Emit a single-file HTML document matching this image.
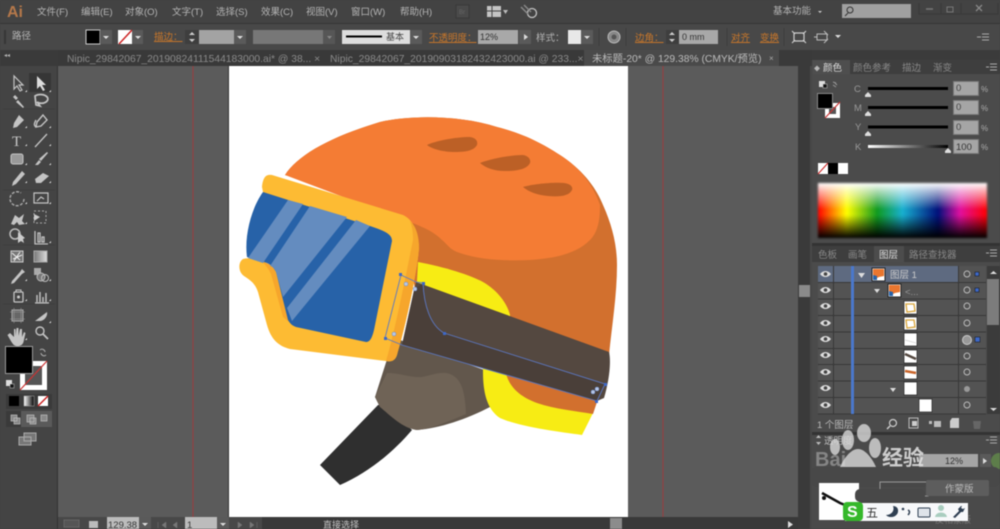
<!DOCTYPE html>
<html><head><meta charset="utf-8"><style>
html,body{margin:0;padding:0;background:#444;width:1000px;height:529px;overflow:hidden}
#w{position:relative;width:1000px;height:529px;overflow:hidden;filter:blur(.45px)}
#s{position:absolute;left:818px;top:183px;width:169px;height:55px;filter:blur(1px);background:linear-gradient(180deg,#fff 0,rgba(255,255,255,.65) 15%,rgba(255,255,255,0) 48%,rgba(0,0,0,0) 58%,#000 100%),linear-gradient(90deg,#f00 0,#ff0 17%,#109a20 35%,#18b0d0 50%,#00107a 71%,#e010a0 84%,#f00 100%)}
svg{position:absolute;left:0;top:0}
text{font-family:"Liberation Sans","Noto Sans CJK SC",sans-serif;font-size:9.5px;fill:#b4b4b4}
.o{fill:#c9772a}.d{fill:#999;font-size:9px}.i{fill:none;stroke:#c4c4c4;stroke-width:1.3}.f{fill:#c4c4c4}
</style></head><body><div id="w">
<svg width="1000" height="529" viewBox="0 0 1000 529">
<defs><linearGradient id="g" x1="0" x2="1"><stop offset="0" stop-color="#777"/><stop offset="1" stop-color="#ddd"/></linearGradient>
<linearGradient id="k" x1="0" x2="1"><stop offset="0" stop-color="#fff"/><stop offset="1" stop-color="#000"/></linearGradient></defs>
<rect width="1000" height="529" fill="#444"/>
<!-- bars -->
<rect width="1000" height="24" fill="#434343"/>
<rect y="24" width="1000" height="26" fill="#484848"/>
<rect y="50" width="1000" height="16" fill="#393939"/>
<rect y="23" width="1000" height="1" fill="#353535"/>
<rect x="0" y="66" width="58" height="463" fill="#444"/>
<rect x="57" y="50" width="1" height="479" fill="#333"/>
<rect x="58" y="66" width="740" height="451" fill="#5b5b5b"/>
<rect x="228" y="66" width="400" height="451" fill="#fff"/>
<rect x="228" y="66" width="1" height="451" fill="#333"/>
<path d="M193 66V517M663 66V517" stroke="#9a3c3e"/>
<rect x="798" y="66" width="12" height="463" fill="#3a3a3a"/>
<rect x="810" y="66" width="2" height="463" fill="#484848"/>
<rect x="799" y="285" width="11" height="12" fill="#8a8a8a"/>
<rect x="58" y="517" width="204" height="12" fill="#484848"/>
<rect x="262" y="517" width="536" height="12" fill="#393939"/>
<rect x="812" y="50" width="188" height="479" fill="#4b4b4b"/>
<rect x="812" y="50" width="188" height="10" fill="#3b3b3b"/>
<!-- menu -->
<text x="7" y="17" style="font-size:16px;font-weight:bold;fill:#b5784a">Ai</text>
<text x="37" y="15">文件(F)</text><text x="81" y="15">编辑(E)</text><text x="125" y="15">对象(O)</text><text x="172" y="15">文字(T)</text><text x="216" y="15">选择(S)</text><text x="261" y="15">效果(C)</text><text x="306" y="15">视图(V)</text><text x="351" y="15">窗口(W)</text><text x="400" y="15">帮助(H)</text>
<rect x="456" y="5" width="13" height="13" fill="#4a4a4a" stroke="#393939"/><text x="459" y="14" style="font-size:6px;fill:#666">Br</text>
<rect x="487" y="6" width="14" height="11" class="f"/><path d="M492 6V17M487 11H501" stroke="#444"/><path d="M503 10l5 0-2.500 4z" fill="#bbb"/>
<circle cx="532" cy="13" r="4.500" class="i"/><path d="M521 7l7 7M524 5l7 7" stroke="#888" stroke-width="1.500"/>
<text x="773" y="14">基本功能</text><path d="M818 11h4l-2 2z" fill="#ccc"/>
<rect x="842" y="4" width="69" height="14" fill="#a0a0a0"/><circle cx="850" cy="10" r="3" fill="none" stroke="#333"/><path d="M848 13l-3 3" stroke="#333"/>
<path d="M919 3V14H998V3M941 3V14M961 3V14" fill="none" stroke="#393939"/>
<path d="M926 9h7" stroke="#777" stroke-width="1.500"/><rect x="947" y="7" width="6" height="5" fill="none" stroke="#777"/><path d="M976 5l6 6M982 5l-6 6" stroke="#888" stroke-width="1.300"/>
<!-- control -->
<path d="M5 30V44" stroke="#373737" stroke-width="2"/>
<text x="12" y="39">路径</text>
<rect x="86" y="30" width="14" height="14" fill="#000" stroke="#ccc"/><rect x="100" y="30" width="12" height="14" fill="#5a5a5a"/><path d="M103 36h6l-3 3z" fill="#ddd"/>
<rect x="118" y="30" width="14" height="14" fill="#fff"/><path d="M119 44L132 30" stroke="#c22" stroke-width="1.500"/><rect x="132" y="30" width="11" height="14" fill="#5a5a5a"/><path d="M135 36h6l-3 3z" fill="#ddd"/>
<text x="154" y="40" class="o" style="text-decoration:underline">描边：</text>
<rect x="185" y="30" width="14" height="14" fill="#3e3e3e"/><path d="M189 35h6l-3-3zM189 39h6l-3 3z" fill="#ccc"/>
<rect x="199" y="30" width="35" height="14" fill="#a3a3a3"/><rect x="234" y="30" width="12" height="14" fill="#5a5a5a"/><path d="M237 36h6l-3 3z" fill="#ddd"/>
<rect x="253" y="30" width="70" height="14" fill="#777"/><rect x="323" y="30" width="12" height="14" fill="#565656"/><path d="M327 36h5l-2.500 3z" fill="#888"/>
<rect x="342" y="30" width="68" height="14" fill="#ddd"/><path d="M346 36.500h36" stroke="#000" stroke-width="2"/><text x="386" y="40" style="font-size:9px;fill:#444">基本</text>
<rect x="410" y="30" width="12" height="14" fill="#5a5a5a"/><path d="M413 36h6l-3 3z" fill="#ddd"/>
<text x="429" y="41" class="o" style="text-decoration:underline">不透明度：</text>
<rect x="478" y="30" width="40" height="14" fill="#a8a8a8"/><text x="480" y="40" style="fill:#333;font-size:9px">12%</text>
<rect x="519" y="30" width="12" height="14" fill="#5a5a5a"/><path d="M524 34l4 3-4 3z" fill="#ddd"/>
<text x="536" y="41">样式：</text>
<rect x="568" y="30" width="13" height="14" fill="#e8e8e8"/><rect x="581" y="30" width="12" height="14" fill="#5a5a5a"/><path d="M584 36h6l-3 3z" fill="#ddd"/>
<circle cx="614" cy="37" r="6" fill="#888" stroke="#bbb"/><circle cx="614" cy="37" r="2.500" fill="#555"/>
<path d="M599 28V46M626 28V46M727 28V46M784 28V46" stroke="#3d3d3d"/>
<text x="635" y="41" class="o" style="text-decoration:underline">边角：</text>
<rect x="666" y="30" width="13" height="14" fill="#3e3e3e"/><path d="M669 35h6l-3-3zM669 39h6l-3 3z" fill="#ccc"/>
<rect x="679" y="30" width="39" height="14" fill="#a8a8a8"/><text x="682" y="40" style="fill:#333;font-size:9px">0 mm</text>
<text x="731" y="41" class="o" style="text-decoration:underline">对齐</text><text x="760" y="41" class="o" style="text-decoration:underline">变换</text>
<path d="M794 33h10v8h-10zM792 31l3 3M806 31l-3 3M792 43l3-3M806 43l-3-3" fill="none" stroke="#ccc" stroke-width="1.200"/>
<path d="M817 34h10v6h-10zM824 31l4 4M824 43l4-4M814 37h3" fill="none" stroke="#bbb"/><path d="M835 35h6l-3 3z" fill="#ddd"/>
<path d="M977 37h4M982 34h7M982 37h7M982 40h7" stroke="#aaa"/>
<!-- tabs -->
<rect x="0" y="50" width="58" height="16" fill="#3a3a3a"/>
<text x="4" y="57" style="font-size:6px">◂◂</text>
<text x="67" y="62" style="fill:#8a8a8a;font-size:10.300px">Nipic_29842067_20190824111544183000.ai* @ 38... ×</text>
<text x="330" y="62" style="fill:#8a8a8a;font-size:10.300px">Nipic_29842067_20190903182432423000.ai @ 233...×</text>
<rect x="584" y="50" width="195" height="16" fill="#4a4a4a"/>
<text x="592" y="62" style="fill:#bbb;font-size:10.300px">未标题-20* @ 129.38% (CMYK/预览)</text><text x="769" y="61" style="fill:#aaa;font-size:8px">×</text>
<rect x="779" y="50" width="33" height="16" fill="#3a3a3a"/>
<!-- helmet -->
<path d="M285 175C298 155 330 137 380 122C410 115 460 115 497 127C525 134 545 145 563 157C585 172 597 190 603 205C612 225 617 245 617 265C617 295 612 325 609 355L415 290L400 200Z" fill="#d2702e"/>
<path d="M285 175C298 155 330 137 380 122C410 115 460 115 497 127C525 134 545 145 563 157C582 170 594 187 600 205C600 220 598 232 590 240C578 252 560 258 530 260C505 261 480 260 460 253C450 250 448 245 442 240C434 232 425 228 415 224Z" fill="#f47c34"/>
<path d="M427 145C435 141 455 137 470 137C476 138 478 141 477 145C474 150 468 152 455 152C443 152 432 149 427 145ZM480 163C490 159 510 155 523 155C529 156 531 160 530 163C527 169 518 171 505 171C494 171 486 168 480 163ZM523 187C533 184 553 182 564 183C571 184 573 187 572 190C569 196 560 197 548 196C537 195 529 192 523 187Z" fill="#bc6026"/>
<path d="M418 262C445 267 470 275 483 282C497 290 507 303 510 315L510 335L416 300Z" fill="#f7ec14"/>
<path d="M378 405L320 465L340 485C370 472 395 450 412 430L385 405Z" fill="#2f2f2f"/>
<path d="M390 350L375 397L380 407C390 415 402 428 417 430C440 428 465 420 492 406L490 372L400 340Z" fill="#62574c"/>
<path d="M387 373C400 373 412 378 422 377C432 375 442 371 450 374C460 378 465 388 466 414C450 421 430 429 417 430C402 428 390 415 380 407L375 397Z" fill="#6f6356"/>
<path d="M483 360L483 372C483 395 488 410 500 418C520 427 560 432 582 435L593 413L598 395Z" fill="#f7ec14"/>
<path d="M505 368C507 385 518 396 537 403C555 409 575 411 593 414L600 393Z" fill="#d2702e"/>
<path d="M416 282L609 352C611 360 610 378 604 398L597 401L402 345Z" fill="#544840"/>
<path d="M423 283C424 305 430 325 444 333L604 384L597 401L402 345L414 290Z" fill="#4a3f39"/>
<!-- goggles -->
<path d="M262 187C263 177 266 174 272 175L403 215C412 219 418 230 419 247C418 268 406 325 397 355C395 361 391 362 386 361L290 349C278 346 271 339 267 325L258 292C255 283 250 280 244 276C238 272 238 262 243 259C252 257 265 259 272 268L300 280L263 192Z" fill="#fdbb33"/>
<path d="M410 221C416 226 419 236 419 247C418 268 406 325 397 355C395 361 391 362 386 361C394 335 405 280 413 240C413 232 412 226 410 221ZM262 262C269 263 273 266 275 270L289 322L283 317L271 274C268 268 265 264 262 262Z" fill="#f6a62c"/>
<path d="M263 192L370 226C385 231 392 234 392 241L374 330C372 338 370 342 366 342L296 327C291 325 290 323 288 320L276 272C273 266 268 262 262 262L247 257C244 235 252 207 263 192Z" fill="#2762a8"/>
<path d="M288 200L303 204L263 263L248 258ZM310 206L347 217L283 297L276 272C274 268 272 266 270 266ZM356 220L370 226L292 321L287 308Z" fill="#648cbf"/>
<!-- selection -->
<path d="M401 275L416 282L423 283C424 305 430 325 444 333L605 384L597 401L402 345L385 338L401 275Z" fill="none" stroke="#5b78c4" stroke-width=".9"/>
<g fill="#3d68c8"><rect x="399" y="273" width="3" height="3"/><rect x="384" y="337" width="3" height="3"/><rect x="422" y="282" width="3" height="3"/><rect x="443" y="332" width="3" height="3"/><rect x="604" y="383" width="3" height="3"/><rect x="595" y="400" width="3" height="3"/></g>
<g fill="#b5c6e6" stroke="#6f8dcc" stroke-width=".5"><circle cx="406" cy="284" r="2"/><circle cx="415" cy="289" r="2"/><circle cx="394" cy="334" r="2"/><circle cx="597" cy="389" r="2"/><circle cx="593" cy="392" r="2"/></g>
<!-- tools -->
<rect x="29" y="73" width="22" height="19" fill="#363636"/>
<g class="f">
<path d="M14 76l0 13 3-3 3 5 2-1-3-5 4 0z" fill="none" stroke="#c4c4c4" stroke-width="1.200"/>
<path d="M37 76l0 13 3-3 3 5 2-1-3-5 4 0z" fill="#ddd"/>
<path d="M15 95l3 3-2 2-3-3zM18 100l6 7-1 1-7-6z"/>
<path d="M35 96a7 4 0 0 1 11 0a6 4 0 0 1-9 6l3 4-4-1z" fill="none" stroke="#c4c4c4" stroke-width="1.700"/>
<path d="M19 115l5 5-7 7-4 1 1-5zM16 123l2 2"/>
<path d="M43 115l4 5-6 6-5 1 1-5zM36 127c-3-2-1-5 0-7" fill="none" stroke="#c4c4c4" stroke-width="1.400"/>
</g>
<text x="12" y="146" style="font-family:'Liberation Serif',serif;font-size:15px;fill:#c8c8c8">T</text>
<path d="M35 147L47 134" stroke="#c4c4c4" stroke-width="1.300"/>
<rect x="11" y="154" width="12" height="10" rx="2" fill="#999" stroke="#c4c4c4"/>
<path d="M47 152l1 1-7 8-2-2zM39 160l2 2-3 3-3 0z" fill="#c4c4c4"/>
<path d="M22 171l3 3-9 10-4 2 1-4z" fill="#c4c4c4"/>
<path d="M35 179l8-6 6 3-8 7h-5z" fill="#c4c4c4"/>
<path d="M24 199a7 7 0 1 1-3-6" fill="none" stroke="#aaa" stroke-width="1.400" stroke-dasharray="3 1.500"/>
<path d="M34 193h14v10h-14zM37 201l4-4 3 2" fill="none" stroke="#c4c4c4" stroke-width="1.200"/>
<path d="M11 224l4-9 4 3 5-4-2 7 3 3-6 1-2-3-3 3z" fill="#c4c4c4"/>
<path d="M34 211l12 0 0 12-12 0z" fill="none" stroke="#aaa" stroke-dasharray="2 2"/><path d="M34 214l6 3-6 4z" fill="#ccc"/>
<circle cx="15" cy="234" r="5" fill="none" stroke="#bbb" stroke-width="1.500"/><path d="M18 232v11l3-2 3 2-1-4 2-1z" fill="#ccc"/>
<path d="M35 231v13h13M38 233v9h2v-9zM42 237v5h2v-5z" fill="none" stroke="#c4c4c4" stroke-width="1.300"/>
<rect x="11" y="251" width="12" height="11" fill="#777" stroke="#ccc"/><path d="M12 253l8 7M20 252l-6 9M13 259l9-4" stroke="#eee"/>
<rect x="34" y="251" width="13" height="11" fill="url(#g)" stroke="#aaa"/>
<path d="M22 269l3 3-3 2-8 9-3 1 1-3 8-9z" fill="#c4c4c4"/>
<rect x="34" y="268" width="7" height="7" fill="#aaa"/><circle cx="41" cy="277" r="4" fill="#777" stroke="#bbb"/><circle cx="45" cy="278" r="3.500" fill="none" stroke="#bbb"/>
<rect x="14" y="292" width="9" height="10" rx="1" fill="none" stroke="#c4c4c4" stroke-width="1.300"/><circle cx="18.500" cy="297" r="1.500" fill="#ccc"/><path d="M16 292v-2h5v2" stroke="#c4c4c4" fill="none"/>
<path d="M35 303H49M37 302v-7M40 302v-10M43 302v-5M46 302v-9" stroke="#c4c4c4" stroke-width="1.400" fill="none"/>
<rect x="12" y="310" width="11" height="11" fill="#666" stroke="#aaa"/><path d="M10 312h15M10 319h15M14 308v15M21 308v15" stroke="#999" stroke-width=".6"/>
<path d="M35 321l12-9c1 4-3 9-7 9z" fill="#c4c4c4"/>
<path d="M10 333l4 4v-8h1.500v7l1-8h2v8l1.500-7h2v8l2-5 1.500 1-2 9c-1 3-3 4-6 4-3 0-4-1-6-4l-4-7z" fill="#c4c4c4"/>
<circle cx="40" cy="331" r="4" fill="none" stroke="#c4c4c4" stroke-width="1.400"/><path d="M43 334l5 5" stroke="#c4c4c4" stroke-width="1.800"/>
<g fill="#ddd"><path d="M25 92h2v-2zM49 92h2v-2zM25 128h2v-2zM49 128h2v-2zM25 146h2v-2zM49 146h2v-2zM25 165h2v-2zM49 165h2v-2zM25 183h2v-2zM49 183h2v-2zM25 204h2v-2zM49 204h2v-2zM25 224h2v-2zM49 243h2v-2zM25 281h2v-2zM49 281h2v-2zM25 301h2v-2zM49 301h2v-2zM49 323h2v-2zM25 340h2v-2z"/></g>
<path d="M3 109H55M3 190H55M3 245H55M3 304H55" stroke="#3b3b3b" opacity=".6"/>
<rect x="20" y="361" width="27" height="29" fill="#fff"/><rect x="25" y="366" width="17" height="19" fill="#555"/><path d="M20 390L47 361" stroke="#c33" stroke-width="1.200"/>
<rect x="5.500" y="346.500" width="27" height="27" fill="#000" stroke="#999"/>
<path d="M40 350c2-2 5 0 5 2M46 355c-2 2-5 0-5-2" fill="none" stroke="#aaa"/>
<rect x="6" y="380" width="6" height="6" fill="#ddd"/><rect x="10" y="384" width="4" height="4" fill="#111" stroke="#ccc" stroke-width=".5"/>
<rect x="6" y="394" width="46" height="15" fill="#3a3a3a"/>
<rect x="9" y="396" width="10" height="10" fill="#000"/><rect x="24" y="396" width="10" height="10" fill="url(#k)" stroke="#aaa" stroke-width=".5"/><rect x="38" y="396" width="10" height="10" fill="#fff"/><path d="M38 406L48 396" stroke="#c22" stroke-width="1.500"/>
<rect x="6" y="411" width="46" height="16" fill="#5a5a5a"/><rect x="6" y="411" width="15" height="16" fill="#3a3a3a"/>
<path d="M11 415h6v6h-6zM14 418h6v6h-6zM27 415h7v7h-7zM30 418h6v6h-6zM41 415h6v6h-6z" fill="#888" stroke="#bbb" stroke-width=".7"/>
<path d="M24 433h12v8h-12zM19 437h12v8h-12z" fill="#777" stroke="#aaa"/>
<!-- color panel -->
<rect x="813" y="60" width="37" height="14" fill="#4e4e4e"/><rect x="850" y="60" width="150" height="14" fill="#3e3e3e"/>
<text x="814" y="71" style="font-size:6px">◆</text><text x="823" y="71" style="fill:#ddd;font-size:9.500px">颜色</text>
<text x="853" y="71" style="fill:#888;font-size:9.500px">颜色参考</text><text x="902" y="71" style="fill:#888;font-size:9.500px">描边</text><text x="933" y="71" style="fill:#888;font-size:9.500px">渐变</text>
<path d="M986 67h3M990 64h7M990 67h7M990 70h7" stroke="#aaa"/>
<rect x="819" y="81" width="6" height="6" fill="#ddd"/><rect x="823" y="84" width="4" height="4" fill="#111" stroke="#ccc" stroke-width=".5"/>
<path d="M833 82l3 1M837 85l-2-2M836 87l-3-2" stroke="#999"/>
<rect x="825" y="103" width="15" height="15" fill="#fff"/><rect x="829" y="107" width="7" height="7" fill="#555"/><path d="M825 118L840 102" stroke="#c33" stroke-width="1.200"/>
<rect x="817.500" y="93.500" width="15" height="15" fill="#000" stroke="#888"/>
<text x="854" y="92" style="fill:#999">C</text><text x="854" y="111" style="fill:#999">M</text><text x="855" y="130" style="fill:#999">Y</text><text x="855" y="150" style="fill:#999">K</text>
<path d="M868 88.500H948M868 107.500H948M868 127H948" stroke="#000" stroke-width="3"/>
<rect x="868" y="145" width="80" height="3" fill="url(#k)"/>
<path d="M868 92l3 3v2h-6v-2zM868 111l3 3v2h-6v-2zM868 131l3 3v2h-6v-2zM948 148l3 3v2h-6v-2z" fill="#ddd"/>
<g fill="#a5a5a5" stroke="#777"><rect x="953.500" y="81.500" width="25" height="14"/><rect x="953.500" y="100.500" width="25" height="14"/><rect x="953.500" y="120.500" width="25" height="14"/><rect x="953.500" y="139.500" width="25" height="14"/></g>
<g style="fill:#333"><text x="956" y="91" style="fill:#444">0</text><text x="956" y="110" style="fill:#444">0</text><text x="956" y="130" style="fill:#444">0</text><text x="956" y="150" style="fill:#333">100</text></g>
<g><text x="981" y="92" style="fill:#aaa;font-size:8px">%</text><text x="981" y="111" style="fill:#aaa;font-size:8px">%</text><text x="981" y="131" style="fill:#aaa;font-size:8px">%</text><text x="981" y="150" style="fill:#aaa;font-size:8px">%</text></g>
<rect x="818" y="163" width="10" height="11" fill="#fff"/><path d="M818 174L828 163" stroke="#c22"/><rect x="828" y="163" width="10" height="11" fill="#000"/><rect x="838" y="163" width="10" height="11" fill="#fff"/>
<rect x="812" y="243" width="188" height="3" fill="#333"/>
<!-- layers -->
<rect x="812" y="246" width="188" height="16" fill="#3e3e3e"/><rect x="874" y="246" width="30" height="16" fill="#4c4c4c"/>
<text x="818" y="258" style="fill:#888">色板</text><text x="848" y="258" style="fill:#888">画笔</text><text x="879" y="258" style="fill:#ddd">图层</text><text x="909" y="258" style="fill:#888">路径查找器</text>
<path d="M986 253h3M990 250h7M990 253h7M990 256h7" stroke="#aaa"/>
<rect x="818" y="266" width="168" height="148" fill="#535353"/>
<rect x="818" y="266" width="140" height="16" fill="#5e6a80"/>
<g stroke="#383838"><path d="M818 282.500H986M818 299H986M818 315.500H986M818 332H986M818 348.500H986M818 364.500H986M818 381H986M818 397.500H986M818 414H986M833.500 266V414M958.500 266V414"/></g>
<rect x="851" y="266" width="3" height="148" fill="#4a78cc"/>
<g fill="#ddd"><path d="M820 274c3-4 8-4 11 0c-3 4-8 4-11 0zM820 290c3-4 8-4 11 0c-3 4-8 4-11 0zM820 306c3-4 8-4 11 0c-3 4-8 4-11 0zM820 323c3-4 8-4 11 0c-3 4-8 4-11 0zM820 339c3-4 8-4 11 0c-3 4-8 4-11 0zM820 355c3-4 8-4 11 0c-3 4-8 4-11 0zM820 372c3-4 8-4 11 0c-3 4-8 4-11 0zM820 388c3-4 8-4 11 0c-3 4-8 4-11 0zM820 405c3-4 8-4 11 0c-3 4-8 4-11 0z"/></g>
<g fill="#444"><circle cx="825.500" cy="274" r="1.800"/><circle cx="825.500" cy="290" r="1.800"/><circle cx="825.500" cy="306" r="1.800"/><circle cx="825.500" cy="323" r="1.800"/><circle cx="825.500" cy="339" r="1.800"/><circle cx="825.500" cy="355" r="1.800"/><circle cx="825.500" cy="372" r="1.800"/><circle cx="825.500" cy="388" r="1.800"/><circle cx="825.500" cy="405" r="1.800"/></g>
<path d="M858 273h7l-3.500 5zM874 289h6l-3 4zM890 388h6l-3 4z" fill="#ddd"/>
<rect x="872" y="268" width="13" height="13" fill="#fff" stroke="#222"/><path d="M873 269h11v7l-5 1-6 3z" fill="#e9762f"/><path d="M873 275l4 1 0 4h-4z" fill="#2762a8"/>
<rect x="888" y="284" width="13" height="13" fill="#fff" stroke="#222"/><path d="M889 285h11v7l-5 1-6 3z" fill="#e9762f"/><path d="M889 291l4 1 0 4h-4z" fill="#2762a8"/>
<text x="890" y="278" style="fill:#ccc">图层 1</text><text x="905" y="295" style="fill:#999">&lt;...</text>
<g fill="#fff" stroke="#222" stroke-width=".7"><rect x="904" y="301" width="13" height="13"/><rect x="904" y="317" width="13" height="13"/><rect x="904" y="333" width="13" height="13"/><rect x="904" y="350" width="13" height="13"/><rect x="904" y="366" width="13" height="13"/><rect x="904" y="382" width="13" height="13"/><rect x="919" y="399" width="13" height="13"/></g>
<path d="M906 304l8 0 1 7-8 1zM906 320l8 0 1 7-8 1z" fill="none" stroke="#d9a63c" stroke-width="1.300"/>
<path d="M905 340l11 3" stroke="#ddd"/><path d="M905 354l11 5" stroke="#544840" stroke-width="2.500"/><path d="M905 371l11 2" stroke="#c9652a" stroke-width="2.500"/>
<g fill="none" stroke="#bbb"><circle cx="967" cy="274" r="3"/><circle cx="967" cy="290" r="3"/><circle cx="967" cy="306" r="3"/><circle cx="967" cy="323" r="3"/><circle cx="967" cy="372" r="3"/><circle cx="967" cy="356" r="3"/><circle cx="967" cy="405" r="3"/></g>
<circle cx="967" cy="340" r="4.500" fill="#999" stroke="#ccc"/><circle cx="967" cy="389" r="3" fill="#999"/>
<g fill="#3d68c8" stroke="#111" stroke-width=".5"><rect x="975" y="272" width="4" height="4"/><rect x="975" y="288" width="4" height="4"/><rect x="975" y="337" width="5" height="5"/></g>
<rect x="987" y="266" width="13" height="148" fill="#3b3b3b"/><rect x="987" y="279" width="12" height="46" fill="#7c7c7c"/>
<path d="M990 274l3.500-3 3.500 3zM990 408l3.500 3 3.500-3z" fill="#ddd"/>
<text x="817" y="428" style="fill:#bbb">1 个图层</text>
<circle cx="893" cy="423" r="3.500" fill="none" stroke="#ccc" stroke-width="1.200"/><path d="M890 426l-3 3" stroke="#ccc" stroke-width="1.500"/>
<path d="M909 418h9v10h-9z" fill="none" stroke="#bbb"/><rect x="912" y="421" width="5" height="5" fill="#ccc"/>
<path d="M929 421h3v3h-3zM934 421h7v6h-7z" fill="#bbb"/><path d="M952 418h7v10h-9v-7z" fill="#ccc"/>
<path d="M973 421h8l-1 8h-6z" fill="#666"/>
<rect x="812" y="432" width="188" height="3" fill="#333"/>
<!-- transparency panel -->
<rect x="812" y="435" width="188" height="94" fill="#4a4a4a"/>
<path d="M816 438h5l-2.500-3zM816 442h5l-2.500 3z" fill="#bbb"/><text x="824" y="444" style="fill:#bbb">透明度</text>
<path d="M986 440h3M990 437h7M990 440h7M990 443h7" stroke="#aaa"/>
<rect x="919" y="454" width="59" height="14" fill="#a5a5a5"/><text x="945" y="464" style="fill:#333;font-size:9px">12%</text>
<rect x="980" y="454" width="11" height="14" fill="#5a5a5a"/><path d="M983 458l4 3-4 3z" fill="#ddd"/>
<circle cx="999" cy="461" r="8" fill="#5d7d4a"/>
<!-- watermark -->
<g fill="#d9d9d9" opacity=".8"><ellipse cx="848" cy="440" rx="6" ry="10"/><ellipse cx="864" cy="433" rx="7" ry="9"/><ellipse cx="875" cy="448" rx="6" ry="10"/><ellipse cx="835" cy="447" rx="5" ry="8"/><path d="M858 449c7 0 14 9 18 18h-36c4-9 11-18 18-18z"/></g>
<text x="882" y="465" style="font-size:21px;font-weight:bold;fill:#e4e4e4;opacity:.85">经验</text>
<text x="815" y="466" style="font-size:20px;font-weight:bold;fill:#ddd;opacity:.4">Bai</text>
<rect x="811" y="467" width="189" height="20" rx="6" fill="#484848"/>
<rect x="819" y="483" width="40" height="37" fill="#fff"/><path d="M822 493l18 10 10 4" stroke="#111" stroke-width="2.500"/><circle cx="824" cy="498" r="2" fill="#111"/>
<rect x="880" y="482" width="48" height="14" fill="none" stroke="#999"/>
<rect x="926" y="480" width="63" height="16" rx="2" fill="#5d5d5d"/><text x="945" y="492" style="fill:#bbb">作蒙版</text>
<text x="935" y="523" style="fill:#777;font-size:9px">反相蒙版</text>
<rect x="855" y="489" width="70" height="13" rx="5" fill="#484848"/>
<rect x="845" y="503" width="123" height="18" fill="#f7f8fa"/>
<rect x="843" y="502" width="20" height="19" rx="4" fill="#35b82a"/><text x="847" y="517" style="font-size:16px;font-weight:bold;fill:#fff">S</text>
<text x="866" y="517" style="fill:#333;font-size:12px">五</text>
<path d="M893 506c2 5-2 9-7 9c3 4 13 2 12-5c0-2-2-4-5-4z" fill="#2f3f52"/>
<circle cx="903" cy="509" r="1.300" fill="#2f3f52"/><path d="M908 510c2 1 2 3 0 5" stroke="#2f3f52" stroke-width="1.500" fill="none"/>
<rect x="918" y="508" width="12" height="9" rx="1" fill="#dfe4ea" stroke="#2f3f52"/>
<circle cx="941" cy="508" r="3" fill="#a9cdbf"/><path d="M935 517c1-6 11-6 12 0z" fill="#a9cdbf"/>
<path d="M961 506l-3 3 1 2-6 6 2 1 6-6 2 0 2-4-2 1-2-1 1-2z" fill="#2f3f52"/>
<!-- status -->
<rect x="64" y="520" width="15" height="7" fill="#555" stroke="#666"/>
<path d="M89 521h9v7h-9z" fill="#bbb"/>
<rect x="107" y="517" width="32" height="12" fill="#bcbcbc"/><text x="108" y="528" style="fill:#333;font-size:9.500px">129.38</text>
<rect x="139" y="517" width="12" height="12" fill="#5a5a5a"/><path d="M142 523h6l-3 3z" fill="#ddd"/>
<path d="M158 522v6M166 522l-4 3 4 3zM177 522l-4 3 4 3zM238 522l4 3-4 3zM250 522l4 3-4 3zM257 522v6" fill="#777" stroke="#777" stroke-width=".5"/>
<rect x="185" y="517" width="32" height="12" fill="#bcbcbc"/><text x="187" y="528" style="fill:#333;font-size:9.500px">1</text>
<rect x="217" y="517" width="12" height="12" fill="#5a5a5a"/><path d="M220 523h6l-3 3z" fill="#ddd"/>
<text x="323" y="528" style="fill:#c4c4c4;font-size:9px">直接选择</text>
<rect x="610" y="518" width="12" height="11" fill="#8c8c8c"/>
<path d="M788 521l5 3.500-5 3.500z" fill="#ddd"/>
</svg>
<div id="s"></div>
</div></body></html>
